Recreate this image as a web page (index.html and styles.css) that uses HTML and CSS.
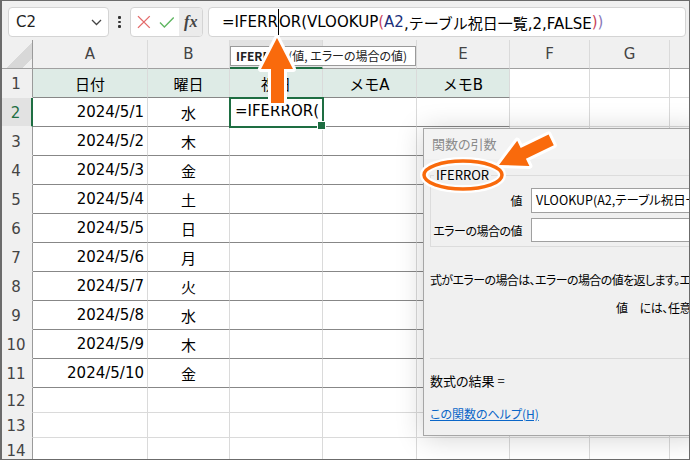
FILE: index.html
```html
<!DOCTYPE html>
<html lang="ja">
<head>
<meta charset="utf-8">
<title>IFERROR</title>
<link rel="stylesheet" href="styles.css">
</head>
<body>
<div class="app">
  <div class="fbar">
    <div class="namebox">
      <span class="nb-text">C2</span>
      <svg class="chev" width="11" height="7" viewBox="0 0 11 7"><path d="M1 1l4.5 4.5L10 1" fill="none" stroke="#444" stroke-width="1.3"/></svg>
    </div>
    <div class="dots"><i></i><i></i><i></i></div>
    <div class="btns">
      <svg class="btn-x" width="14" height="14" viewBox="0 0 14 14"><path d="M1 1L13 13M13 1L1 13" stroke="#e46a6a" stroke-width="1.4" fill="none"/></svg>
      <svg class="btn-ok" width="16" height="13" viewBox="0 0 16 13"><path d="M1 6.5L5.5 11L15 1.5" stroke="#5fb661" stroke-width="1.4" fill="none"/></svg>
      <span class="fx">fx</span>
    </div>
    <div class="formula"><span>=IFERR</span><span class="caret"></span><span>OR(VLOOKUP</span><span class="p1">(</span><span class="ref">A2</span>,テーブル祝日一覧,2,FALSE<span class="p1">)</span><span class="p2">)</span></div>
  </div>

  <div class="sheet">
    <div class="c corner"></div>
    <div class="c ch">A</div>
    <div class="c ch">B</div>
    <div class="c ch sel">C</div>
    <div class="c ch">D</div>
    <div class="c ch">E</div>
    <div class="c ch">F</div>
    <div class="c ch">G</div>
    <div class="c ch"></div>

    <div class="c rh">1</div>
    <div class="c t th">日付</div>
    <div class="c t th">曜日</div>
    <div class="c t th">祝日</div>
    <div class="c t th">メモA</div>
    <div class="c t th">メモB</div>
    <div class="c"></div><div class="c"></div><div class="c"></div>

    <div class="c rh sel">2</div>
    <div class="c t num">2024/5/1</div>
    <div class="c t ctr">水</div>
    <div class="c t active">=IFERROR(</div>
    <div class="c t"></div><div class="c t"></div>
    <div class="c"></div><div class="c"></div><div class="c"></div>

    <div class="c rh">3</div>
    <div class="c t num">2024/5/2</div>
    <div class="c t ctr">木</div>
    <div class="c t"></div><div class="c t"></div><div class="c t"></div>
    <div class="c"></div><div class="c"></div><div class="c"></div>

    <div class="c rh">4</div>
    <div class="c t num">2024/5/3</div>
    <div class="c t ctr">金</div>
    <div class="c t"></div><div class="c t"></div><div class="c t"></div>
    <div class="c"></div><div class="c"></div><div class="c"></div>

    <div class="c rh">5</div>
    <div class="c t num">2024/5/4</div>
    <div class="c t ctr">土</div>
    <div class="c t"></div><div class="c t"></div><div class="c t"></div>
    <div class="c"></div><div class="c"></div><div class="c"></div>

    <div class="c rh">6</div>
    <div class="c t num">2024/5/5</div>
    <div class="c t ctr">日</div>
    <div class="c t"></div><div class="c t"></div><div class="c t"></div>
    <div class="c"></div><div class="c"></div><div class="c"></div>

    <div class="c rh">7</div>
    <div class="c t num">2024/5/6</div>
    <div class="c t ctr">月</div>
    <div class="c t"></div><div class="c t"></div><div class="c t"></div>
    <div class="c"></div><div class="c"></div><div class="c"></div>

    <div class="c rh">8</div>
    <div class="c t num">2024/5/7</div>
    <div class="c t ctr">火</div>
    <div class="c t"></div><div class="c t"></div><div class="c t"></div>
    <div class="c"></div><div class="c"></div><div class="c"></div>

    <div class="c rh">9</div>
    <div class="c t num">2024/5/8</div>
    <div class="c t ctr">水</div>
    <div class="c t"></div><div class="c t"></div><div class="c t"></div>
    <div class="c"></div><div class="c"></div><div class="c"></div>

    <div class="c rh">10</div>
    <div class="c t num">2024/5/9</div>
    <div class="c t ctr">木</div>
    <div class="c t"></div><div class="c t"></div><div class="c t"></div>
    <div class="c"></div><div class="c"></div><div class="c"></div>

    <div class="c rh">11</div>
    <div class="c t num">2024/5/10</div>
    <div class="c t ctr">金</div>
    <div class="c t"></div><div class="c t"></div><div class="c t"></div>
    <div class="c"></div><div class="c"></div><div class="c"></div>

    <div class="c rh">12</div>
    <div class="c"></div><div class="c"></div><div class="c"></div><div class="c"></div><div class="c"></div><div class="c"></div><div class="c"></div><div class="c"></div>
    <div class="c rh">13</div>
    <div class="c"></div><div class="c"></div><div class="c"></div><div class="c"></div><div class="c"></div><div class="c"></div><div class="c"></div><div class="c"></div>
    <div class="c rh">14</div>
    <div class="c"></div><div class="c"></div><div class="c"></div><div class="c"></div><div class="c"></div><div class="c"></div><div class="c"></div><div class="c"></div>
  </div>

  <div class="tip"><b>IFERROR</b>(値, エラーの場合の値)</div>

  <div class="dlg">
    <div class="dlg-title">関数の引数</div>
    <div class="dlg-body">
      <div class="grp">
        <span class="grp-label">IFERROR</span>
        <div class="arg"><span class="arg-name">値</span><span class="arg-input">VLOOKUP(A2,テーブル祝日一覧,2,FALSE)</span></div>
        <div class="arg arg2"><span class="arg-name">エラーの場合の値</span><span class="arg-input"></span></div>
      </div>
      <p class="desc">式がエラーの場合は、エラーの場合の値を返します。エラーでない場合は、式の値自体を返します。</p>
      <p class="desc2"><span class="d2name">値</span>には、任意の値、式、または参照を指定します。</p>
      <div class="sep"></div>
      <p class="result">数式の結果 =</p>
      <a class="help" href="#">この関数のヘルプ(H)</a>
    </div>
  </div>

  <svg class="marks" width="690" height="460" viewBox="0 0 690 460">
    <g stroke="#fff" stroke-width="6" stroke-linejoin="round" fill="#fff">
      <polygon points="277,38 261,69 271,69 271,103 284,103 284,69 293,69"/>
      <polygon points="499,165 517.2,140.7 520.7,147.9 548.6,134.5 553.8,145.3 525.9,158.7 529.4,165.9"/>
      <ellipse cx="463" cy="175" rx="39" ry="14" fill="none" stroke-width="8"/>
    </g>
    <g fill="#f96a0c">
      <polygon points="277,38 261,69 271,69 271,103 284,103 284,69 293,69"/>
      <polygon points="499,165 517.2,140.7 520.7,147.9 548.6,134.5 553.8,145.3 525.9,158.7 529.4,165.9"/>
      <ellipse cx="463" cy="175" rx="39" ry="14" fill="none" stroke="#f96a0c" stroke-width="3.5"/>
    </g>
  </svg>

  <div class="frame"></div>
</div>
</body>
</html>
```
FILE: styles.css
```css
* { box-sizing: border-box; margin: 0; padding: 0; }
html, body { width: 690px; height: 460px; overflow: hidden; background: #fff; }
body { font-family: "DejaVu Sans", "Noto Sans CJK JP", sans-serif; color: #000; }

.app { position: relative; width: 690px; height: 460px; overflow: hidden; background: #f0f0f0; }
.frame { position: absolute; inset: 0; border: 1px solid #6b6b6b; border-left-width: 2px; pointer-events: none; z-index: 60; }

/* formula bar */
.fbar { display: flex; align-items: stretch; height: 40px; padding: 7px 0 3px 8px; }
.namebox { width: 101px; background: #fff; border: 1px solid #d4d4d4; border-radius: 4px; display: flex; align-items: center; justify-content: space-between; padding: 0 6px 0 7px; }
.nb-text { font-size: 15px; color: #222; }
.dots { width: 21px; display: flex; flex-direction: column; align-items: center; justify-content: center; gap: 2px; }
.dots i { display: block; width: 2.5px; height: 2.5px; background: #333; border-radius: 1px; }
.btns { width: 73px; background: #fff; border: 1px solid #d4d4d4; border-radius: 4px; display: flex; align-items: center; padding-left: 6px; }
.btn-x { margin-right: 8px; }
.btn-ok { margin-right: 5px; }
.fx { margin-left: auto; width: 23px; height: 100%; background: #ebebeb; border-radius: 0 3px 3px 0; font-family: "Liberation Serif", serif; font-style: italic; font-weight: bold; font-size: 16px; color: #444; display: flex; align-items: center; justify-content: center; }
.formula { flex: 1; margin-left: 5px; margin-right: 4px; background: #fff; border: 1px solid #d4d4d4; border-radius: 4px; display: flex; align-items: center; padding-left: 13px; font-size: 15px; white-space: nowrap; overflow: hidden; }
.caret { display: inline-block; width: 0; height: 26px; border-left: 1.5px solid #000; }
.p1 { color: #c8445a; }
.p2 { color: #8a78b8; }
.ref { color: #1c2f7a; }

/* sheet */
.sheet { display: grid; grid-template-columns: 33px 115px 82px 93px 94px 93px 80px 80px 20px; grid-template-rows: repeat(12, 29px) repeat(3, 25px); background: #fff; }
.c { border-right: 1px solid #dadada; border-bottom: 1px solid #dadada; display: flex; align-items: center; font-size: 15px; white-space: nowrap; overflow: hidden; background: #fff; }
.corner { background: #f0f0f0 linear-gradient(135deg, transparent 58%, #d8d8d8 58%, #d8d8d8 84%, transparent 84%); border-bottom-color: #a0a0a0; border-right-color: #9a9a9a; }
.ch { background: #f0f0f0; justify-content: center; color: #444; border-bottom-color: #a0a0a0; }
.ch.sel { border-bottom: 2px solid #1e6e42; color: #1e6e42; background: #e2e2e2; }
.rh { background: #f0f0f0; justify-content: center; color: #444; border-right-color: #9a9a9a; border-bottom-color: #f0f0f0; padding-top: 2px; }
.rh.sel { color: #1e6e42; border-right: 2px solid #1e6e42; background: #e2e2e2; }
.t { border-bottom-color: #878787; }
.th { background: #deebe6; justify-content: center; }
.num { justify-content: flex-end; padding-right: 3px; }
.ctr { justify-content: center; }
.active { position: relative; z-index: 2; overflow: visible; outline: 2px solid #1e6e42; outline-offset: -1px; padding-left: 5px; padding-bottom: 3px; }
.active::after { content: ""; position: absolute; right: -4px; bottom: -4px; width: 7px; height: 7px; background: #1e6e42; border: 1px solid #fff; }

/* tooltip */
.tip { position: absolute; left: 230px; top: 46px; height: 20px; width: 186px; background: #fff; border: 1px solid #9a9a9a; font-family: "Noto Sans CJK JP", sans-serif; font-size: 12px; line-height: 18px; padding-left: 5px; white-space: nowrap; overflow: hidden; font-feature-settings: "palt"; color: #222; z-index: 20; }
.tip b { font-weight: bold; }

/* dialog */
.dlg { position: absolute; left: 423px; top: 128px; width: 280px; height: 308px; background: #f0f0f0; border: 1px solid #a6a6a6; box-shadow: 0 2px 26px rgba(0,0,0,0.18); font-family: "Noto Sans CJK JP", sans-serif; font-size: 12px; font-feature-settings: "palt"; z-index: 30; }
.dlg-title { height: 30px; background: #f3f3f3; color: #8a8a8a; font-size: 13px; line-height: 30px; padding-left: 8px; }
.dlg-body { padding-left: 6px; }
.grp { margin-top: 16px; border: 1px solid #dcdcdc; border-right: none; padding-bottom: 4px; }
.grp-label { display: block; width: fit-content; margin-top: -10px; margin-left: 3px; padding: 0 2px; background: #f0f0f0; font-size: 13px; line-height: 18px; }
.arg { display: flex; align-items: center; margin-top: 4px; height: 25px; }
.arg2 { margin-top: 5px; height: 24px; }
.arg-name { width: 91px; display: flex; justify-content: flex-end; white-space: nowrap; font-size: 12px; letter-spacing: -0.5px; flex: none; }
.arg-input { flex: 1; margin-left: 9px; height: 100%; background: #fff; border: 1px solid #a0a0a0; border-right: none; padding-left: 4px; font-size: 12.5px; line-height: 22px; white-space: nowrap; overflow: hidden; }
.desc { margin-top: 24px; line-height: 18px; white-space: nowrap; letter-spacing: -0.6px; }
.desc2 { margin-top: 10px; padding-left: 186px; line-height: 18px; white-space: nowrap; letter-spacing: -0.4px; }
.d2name { margin-right: 12px; }
.sep { margin-top: 41px; height: 1px; background: #d9d9d9; }
.result { margin-top: 13px; line-height: 18px; font-size: 13px; }
.help { display: block; margin-top: 15px; line-height: 18px; color: #0a66c8; text-decoration: underline; }

.marks { position: absolute; left: 0; top: 0; pointer-events: none; z-index: 40; }
```
